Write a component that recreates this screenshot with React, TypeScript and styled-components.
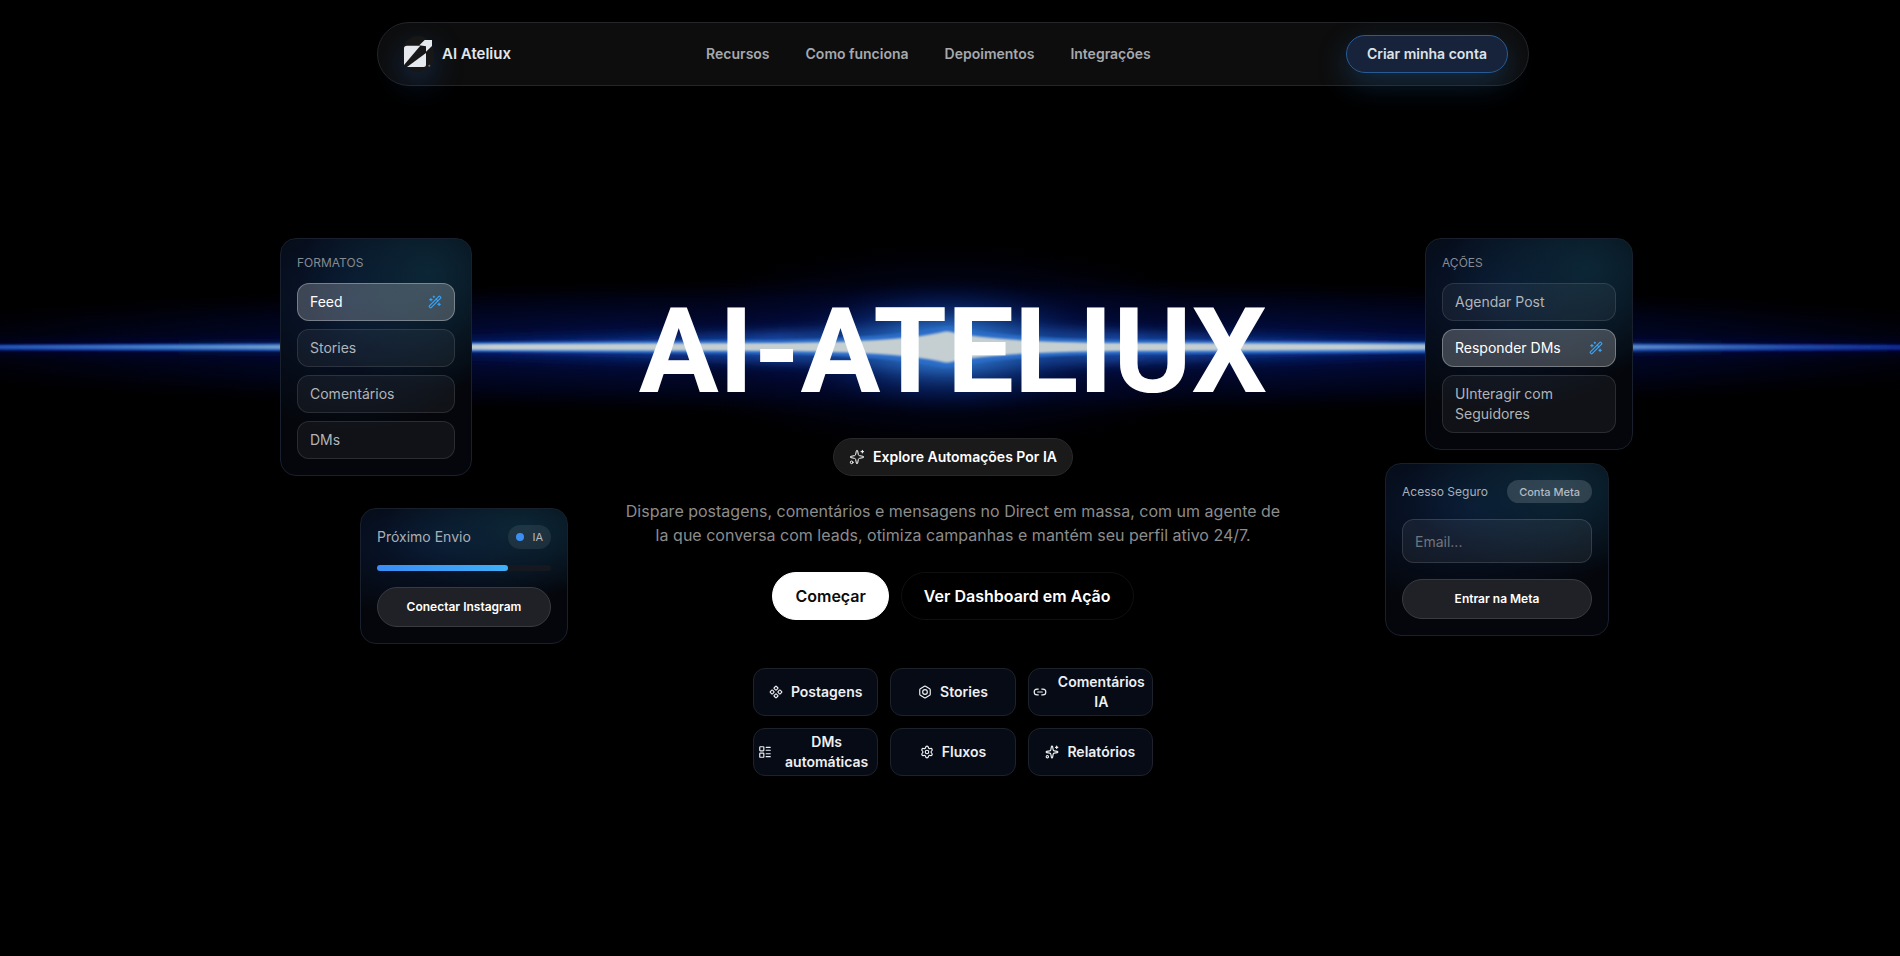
import React from "react";
import styled, { createGlobalStyle } from "styled-components";
import { Bolt, Component, LayoutList, Link2, Settings, Sparkles, WandSparkles } from "lucide-react";

const Global = createGlobalStyle`
  *, *::before, *::after { box-sizing: border-box; }
  body { margin: 0; background: #000; color: #fff; font-family: Inter, "Liberation Sans", sans-serif; font-size: 14px; line-height: 20px; }
  button, input { font: inherit; color: inherit; }
  a { color: inherit; text-decoration: none; }
  h1, h2, p, ul { margin: 0; padding: 0; }
  ul { list-style: none; }
`;

const Page = styled.div`
  position: relative;
  min-height: 100vh;
  padding-left: 6px;
  overflow: hidden;
  background: #000;
`;

const Beam = styled.svg`
  position: absolute;
  top: 200px;
  left: 0;
  width: 100%;
  height: 296px;
`;

const Header = styled.header`
  position: relative;
  display: flex;
  align-items: center;
  justify-content: space-between;
  width: min(1152px, calc(100% - 32px));
  height: 64px;
  margin: 22px auto 0;
  padding: 0 20px 0 24px;
  border: 1px solid #242528;
  border-radius: 32px;
  background: #0d0d0d;
`;

const Brand = styled.a`
  display: flex;
  align-items: center;
  gap: 8px;
  font-size: 15px;
  font-weight: 600;
  color: #e2e6ea;
`;

const LogoDisc = styled.span`
  display: flex;
  width: 32px;
  height: 36px;
  align-items: center;
  justify-content: center;
  border-radius: 50%;
  background: #171717;
  box-shadow: 0 10px 30px rgba(37, 106, 200, 0.35);
`;

const Nav = styled.nav`
  display: flex;
  gap: 36px;
  font-weight: 600;
  color: #a6a9ad;
`;

const Pill = styled.button<{ $bg: string; $line: string; $h: number; $pad: number }>`
  display: inline-flex;
  align-items: center;
  justify-content: center;
  gap: 8px;
  height: ${(p) => p.$h}px;
  padding: 0 ${(p) => p.$pad}px;
  border: 1px solid ${(p) => p.$line};
  border-radius: 24px;
  background: ${(p) => p.$bg};
  font-weight: 600;
  white-space: nowrap;
  cursor: pointer;
`;

const AccountButton = styled(Pill)`
  color: #dfe3e8;
  box-shadow: 0 10px 30px rgba(40, 120, 200, 0.3);
`;

const Main = styled.main`
  position: relative;
  display: grid;
  grid-template-columns: 1fr 664px 1fr;
  padding-top: 152px;
`;

const Side = styled.aside<{ $right?: boolean }>`
  display: flex;
  flex-direction: column;
  align-items: ${(p) => (p.$right ? "flex-start" : "flex-end")};
  gap: ${(p) => (p.$right ? 13 : 32)}px;
`;

const Card = styled.section<{ $w: number; $inset: number; $right?: boolean }>`
  width: ${(p) => p.$w}px;
  margin-left: ${(p) => (p.$right ? p.$inset : 0)}px;
  margin-right: ${(p) => (p.$right ? 0 : p.$inset)}px;
  padding: 16px;
  border: 1px solid #17202c;
  border-radius: 16px;
  background:
    radial-gradient(ellipse 66% 50% at 78% 14%, rgba(14, 46, 62, 0.75), transparent),
    radial-gradient(ellipse 80% 56% at 38% 26%, rgba(12, 34, 72, 0.65), transparent),
    #04060b;
`;

const CardTitle = styled.h2`
  margin-bottom: 12px;
  font-size: 12px;
  line-height: 16px;
  font-weight: 400;
  color: #858b93;
`;

const Options = styled.ul`
  display: flex;
  flex-direction: column;
  gap: 8px;
`;

const Option = styled.button<{ $active?: boolean }>`
  display: flex;
  align-items: center;
  justify-content: space-between;
  width: 100%;
  padding: 8px 12px;
  border: 1px solid ${(p) => (p.$active ? "rgba(255,255,255,.3)" : "rgba(255,255,255,.11)")};
  border-radius: 12px;
  background: ${(p) => (p.$active ? "rgba(255,255,255,.22)" : "rgba(255,255,255,.05)")};
  color: ${(p) => (p.$active ? "#fff" : "#b1b5ba")};
  text-align: left;
  cursor: pointer;
  svg { color: #38a3f5; }
`;

const CardHead = styled.div<{ $small?: boolean }>`
  display: flex;
  align-items: center;
  justify-content: space-between;
  height: ${(p) => (p.$small ? 23 : 24)}px;
  font-size: ${(p) => (p.$small ? 12 : 14)}px;
  color: #a9afb7;
`;

const Tag = styled.span`
  display: inline-flex;
  align-items: center;
  gap: 8px;
  height: 24px;
  padding: 0 8px;
  border-radius: 12px;
  background: rgba(255, 255, 255, 0.08);
  font-size: 11px;
  color: #b4bac2;
`;

const MetaTag = styled(Tag)`
  height: 23px;
  padding: 0 12px;
  background: rgba(255, 255, 255, 0.15);
  font-weight: 500;
`;

const Dot = styled.i`
  width: 8px;
  height: 8px;
  border-radius: 50%;
  background: #3b8ff3;
`;

const Track = styled.div`
  height: 6px;
  margin: 16px 0;
  border-radius: 3px;
  background: #15191f;
`;

const Fill = styled.div`
  height: 100%;
  border-radius: 3px;
  background: linear-gradient(90deg, #3a8df5, #3fb0f8);
`;

const CardButton = styled(Pill)`
  width: 100%;
  font-size: 12px;
`;

const Email = styled.input`
  display: block;
  width: 100%;
  height: 44px;
  margin: 16px 0;
  padding: 0 12px;
  border: 1px solid rgba(255, 255, 255, 0.13);
  border-radius: 12px;
  background: rgba(255, 255, 255, 0.06);
  &::placeholder { color: #70757d; opacity: 1; }
`;

const Hero = styled.div`
  display: flex;
  flex-direction: column;
  align-items: center;
  padding-top: 50px;
  text-align: center;
`;

const Title = styled.h1`
  margin-bottom: 22px;
  font-family: Roboto, "Liberation Sans", sans-serif;
  font-size: 119px;
  line-height: 128px;
  font-weight: 700;
  white-space: nowrap;
`;

const Lead = styled.p`
  margin: 23px 0 25px;
  font-size: 16px;
  line-height: 24px;
  color: #8c8c8c;
`;

const Actions = styled.div`
  display: flex;
  gap: 12px;
`;

const Action = styled(Pill)<{ $dark?: boolean }>`
  font-size: 16px;
  color: ${(p) => (p.$dark ? "#0b0b0b" : "#fff")};
`;

const Features = styled.div`
  display: grid;
  grid-template-columns: repeat(3, 1fr);
  gap: 12px;
  width: 400px;
  margin-top: 48px;
`;

const Feature = styled.button`
  display: flex;
  align-items: center;
  justify-content: center;
  gap: 8px;
  height: 48px;
  padding: 0 4px;
  border: 1px solid #1e222a;
  border-radius: 12px;
  background: #060b16;
  font-weight: 600;
  color: #eef0f3;
  cursor: pointer;
  svg { flex: none; }
`;

const Logo = () => (
  <svg width="28" height="28" viewBox="0 0 28 28" aria-hidden="true">
    <path d="M0 8.5Q0 5.7 3 5.7H16.3L0 25Z" fill="#e6eaee" />
    <path d="M22 13V24.5Q22 27 19.5 27H3Z" fill="#e6eaee" />
    <path d="M15.3 5.2L20.7 0H28V6L22 11.7V6.2Z" fill="#e6eaee" />
    <circle cx="25.3" cy="25.7" r="1" fill="#6c7075" />
  </svg>
);

const features = [
  { icon: Component, label: "Postagens" },
  { icon: Bolt, label: "Stories" },
  { icon: Link2, label: "Comentários IA" },
  { icon: LayoutList, label: "DMs automáticas" },
  { icon: Settings, label: "Fluxos" },
  { icon: Sparkles, label: "Relatórios" },
];

const OptionList = ({ items, active }: { items: string[]; active: string }) => (
  <Options>
    {items.map((t) => (
      <li key={t}>
        <Option $active={t === active}>
          {t}
          {t === active && <WandSparkles size={14} />}
        </Option>
      </li>
    ))}
  </Options>
);

export default function App() {
  return (
    <Page>
      <Global />
      <Beam viewBox="0 0 1900 296" preserveAspectRatio="none" aria-hidden="true">
        <defs>
          <radialGradient id="haze">
            <stop offset="0" stopColor="#06237c" />
            <stop offset=".35" stopColor="#020e4a" stopOpacity=".8" />
            <stop offset=".7" stopColor="#010524" stopOpacity=".6" />
            <stop offset="1" stopColor="#000" stopOpacity="0" />
          </radialGradient>
          <radialGradient id="core">
            <stop offset="0" stopColor="#4a90d8" />
            <stop offset=".3" stopColor="#2563b4" stopOpacity=".9" />
            <stop offset=".65" stopColor="#0a2c70" stopOpacity=".5" />
            <stop offset="1" stopColor="#010a30" stopOpacity="0" />
          </radialGradient>
          <linearGradient id="glow">
            <stop offset="0" stopColor="#04106a" stopOpacity=".5" />
            <stop offset=".25" stopColor="#06289a" stopOpacity=".6" />
            <stop offset=".5" stopColor="#2a6cc4" />
            <stop offset=".75" stopColor="#06289a" stopOpacity=".6" />
            <stop offset="1" stopColor="#04106a" stopOpacity=".5" />
          </linearGradient>
          <linearGradient id="edge">
            <stop offset="0" stopColor="#0d2f9c" />
            <stop offset=".3" stopColor="#2c6cc8" />
            <stop offset=".7" stopColor="#2c6cc8" />
            <stop offset="1" stopColor="#08187c" />
          </linearGradient>
          <linearGradient id="ray">
            <stop offset="0" stopColor="#2556b0" />
            <stop offset=".1" stopColor="#4a86c8" />
            <stop offset=".18" stopColor="#7ca6cc" />
            <stop offset=".27" stopColor="#c5cfd2" />
            <stop offset=".7" stopColor="#c5cfd2" />
            <stop offset=".82" stopColor="#6a9cd0" />
            <stop offset=".92" stopColor="#2858b0" />
            <stop offset="1" stopColor="#0e2284" />
          </linearGradient>
          <filter id="soft" x="-5%" y="-100%" width="110%" height="300%"><feGaussianBlur stdDeviation="2 1" /></filter>
          <filter id="softer" x="-5%" y="-300%" width="110%" height="700%"><feGaussianBlur stdDeviation="8 6" /></filter>
        </defs>
        <ellipse cx="950" cy="147" rx="1250" ry="74" fill="url(#haze)" />
        <ellipse cx="947" cy="147" rx="330" ry="116" fill="url(#haze)" opacity=".5" />
        <path d="M-40 144Q700 143 947 124Q1200 143 1940 144V151Q1200 152 947 170Q700 152 -40 151Z" fill="url(#glow)" filter="url(#softer)" />
        <ellipse cx="947" cy="147" rx="170" ry="68" fill="url(#core)" />
        <path d="M-40 145L500 142L780 140Q890 138 947 126Q1004 138 1120 140L1400 142L1940 145V150L1400 153L1120 154Q1004 156 947 168Q890 156 780 154L500 152L-40 150Z" fill="url(#edge)" filter="url(#soft)" />
        <path d="M-40 146L500 144L780 143Q905 142 947 131Q989 142 1120 143L1400 144L1940 146V148L1400 150L1120 151Q989 152 947 163Q905 152 780 151L500 150L-40 148Z" fill="url(#ray)" filter="url(#soft)" />
      </Beam>

      <Header>
        <Brand href="#inicio"><LogoDisc><Logo /></LogoDisc>AI Ateliux</Brand>
        <Nav>
          <a href="#recursos">Recursos</a>
          <a href="#como-funciona">Como funciona</a>
          <a href="#depoimentos">Depoimentos</a>
          <a href="#integracoes">Integrações</a>
        </Nav>
        <AccountButton $bg="#17233b" $line="#285a94" $h={38} $pad={20}>Criar minha conta</AccountButton>
      </Header>

      <Main>
        <Side>
          <Card $w={192} $inset={149}>
            <CardTitle>FORMATOS</CardTitle>
            <OptionList items={["Feed", "Stories", "Comentários", "DMs"]} active="Feed" />
          </Card>
          <Card $w={208} $inset={53}>
            <CardHead>Próximo Envio<Tag><Dot />IA</Tag></CardHead>
            <Track><Fill style={{ width: "75%" }} /></Track>
            <CardButton $bg="#202126" $line="#393b41" $h={40} $pad={16}>Conectar Instagram</CardButton>
          </Card>
        </Side>

        <Hero>
          <Title>AI-ATELIUX</Title>
          <Pill as="a" href="#automacoes" $bg="#1a1a1b" $line="#29292d" $h={38} $pad={15}>
            <Sparkles size={16} strokeWidth={1.5} />Explore Automações Por IA
          </Pill>
          <Lead>
            Dispare postagens, comentários e mensagens no Direct em massa, com um agente de<br />
            Ia que conversa com leads, otimiza campanhas e mantém seu perfil ativo 24/7.
          </Lead>
          <Actions>
            <Action $dark $bg="#fff" $line="#fff" $h={48} $pad={22}>Começar</Action>
            <Action $bg="#000" $line="#101010" $h={48} $pad={22}>Ver Dashboard em Ação</Action>
          </Actions>
          <Features>
            {features.map(({ icon: Icon, label }) => (
              <Feature key={label}><Icon size={14} /><span>{label}</span></Feature>
            ))}
          </Features>
        </Hero>

        <Side $right>
          <Card $w={208} $inset={140} $right>
            <CardTitle>AÇÕES</CardTitle>
            <OptionList items={["Agendar Post", "Responder DMs", "UInteragir com Seguidores"]} active="Responder DMs" />
          </Card>
          <Card $w={224} $inset={100} $right>
            <CardHead $small>Acesso Seguro<MetaTag>Conta Meta</MetaTag></CardHead>
            <Email type="email" placeholder="Email..." aria-label="Email" />
            <CardButton $bg="#202126" $line="#393b41" $h={40} $pad={16}>Entrar na Meta</CardButton>
          </Card>
        </Side>
      </Main>
    </Page>
  );
}
